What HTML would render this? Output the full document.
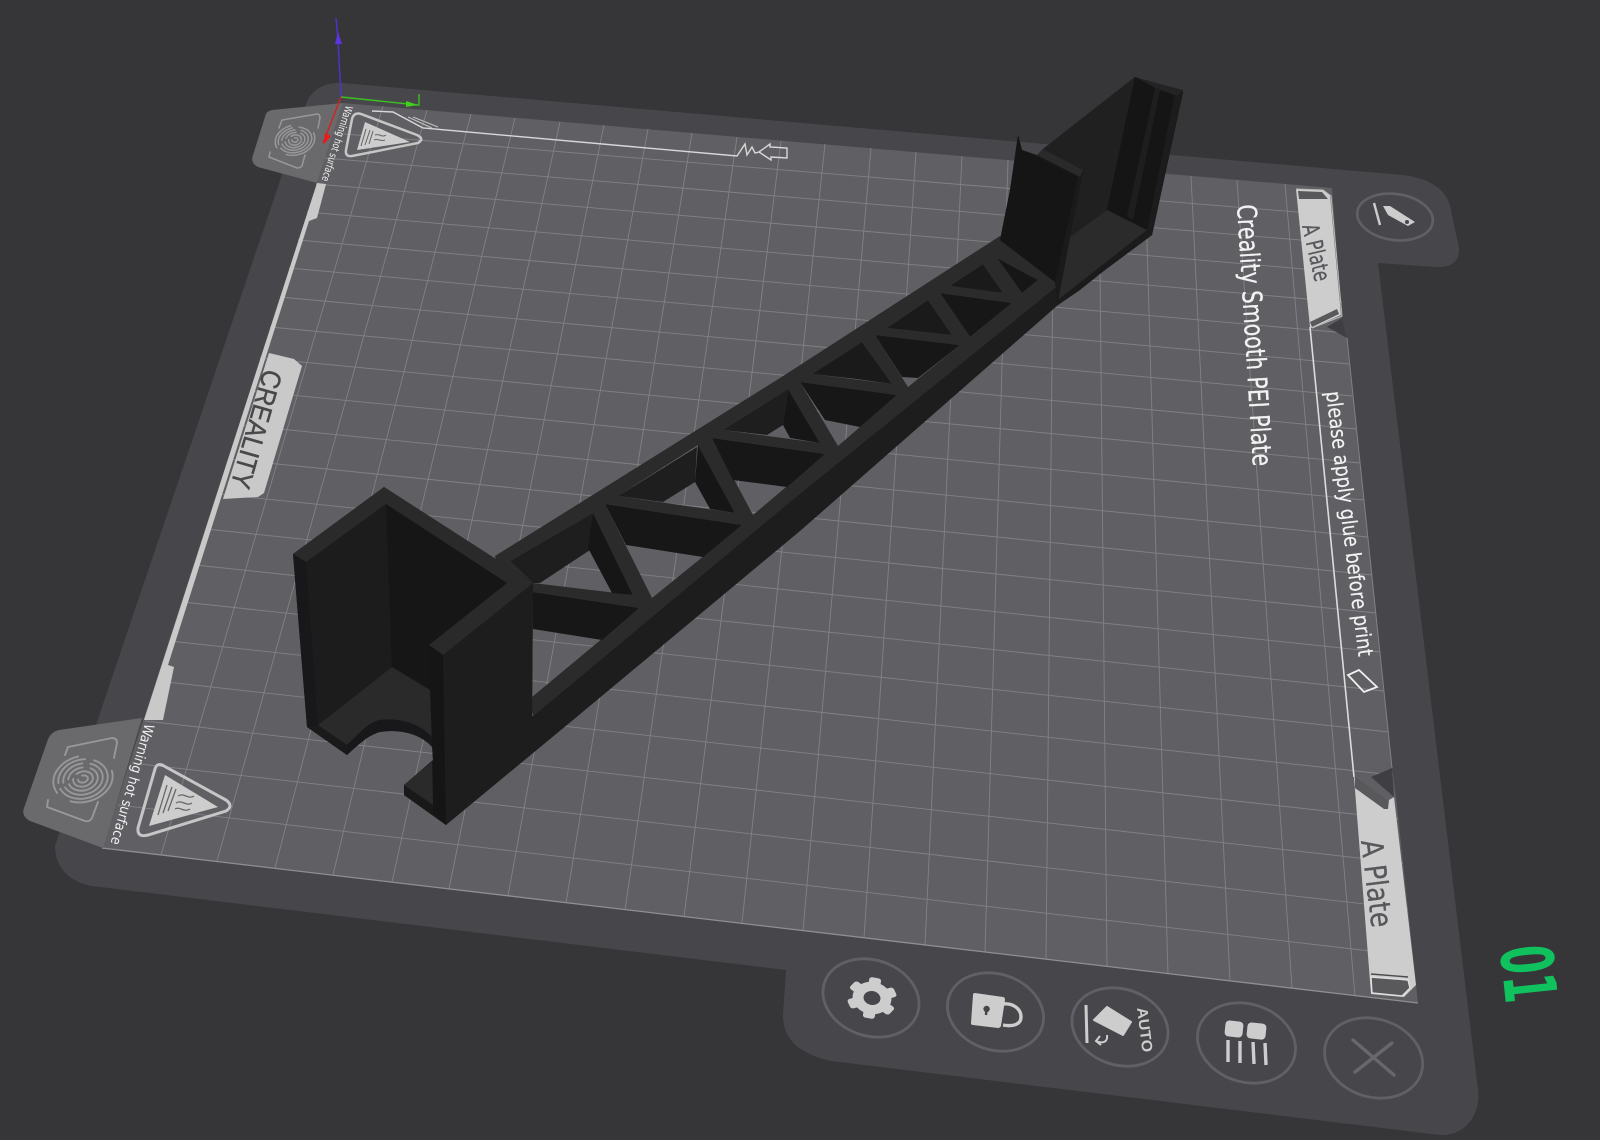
<!DOCTYPE html>
<html><head><meta charset="utf-8"><title>Creality Print</title>
<style>html,body{margin:0;padding:0;background:#363638;width:1600px;height:1140px;overflow:hidden}svg{display:block}text{font-family:"DejaVu Sans","Liberation Sans",sans-serif}</style>
</head><body>
<svg xmlns="http://www.w3.org/2000/svg" width="1600" height="1140" viewBox="0 0 1600 1140">
<rect width="1600" height="1140" fill="#363638"/>
<!-- bed -->
<path d="M306 104C311 90 325 82 342 83L1402 175C1430 178 1448 190 1451 210L1459 248C1460 262 1450 268 1436 267L1378 263L1478 1090C1481 1115 1465 1136 1440 1135L831 1061C800 1054 783 1040 783 1015L786 970L92 886C70 882 55 868 55 846Z" fill="#47474b"/>
<path d="M343 103L1332 188L1342 318L1347 338L1392 768L1396 797L1418 1003L102 848Z" fill="#606064"/>
<!-- grid -->
<path fill="none" stroke="#828286" stroke-width=".9" d="M161 855L383 106M217 861L427 110M275 868L471 114M333 875L515 118M392 882L560 122M449 889L604 125M508 896L648 129M566 903L692 133M625 910L737 137M684 917L781 141M742 923L825 144M803 931L871 148M864 938L916 152M925 945L962 156M985 952L1008 160M1046 959L1054 164M1107 966L1099 168M1168 974L1145 172M1230 981L1191 176M1292 988L1237 180M1355 996L1285 184"/>
<path fill="none" stroke="#828286" stroke-width=".9" d="M332 133L1333 215M324 158L1336 243M316 184L1339 272M307 212L1342 302M298 240L1346 333M289 268L1349 364M280 297L1352 396M270 327L1356 429M260 358L1360 463M250 391L1364 500M239 425L1368 537M228 459L1372 575M217 494L1376 613M206 529L1380 652M195 565L1384 691M183 602L1389 732M170 641L1393 775M158 681L1398 819M145 721L1403 863M132 763L1408 909M118 805L1413 956"/>
<path d="M102 848L1418 1003" stroke="#8f8f92" stroke-width="1.3" fill="none"/>
<!-- left strips -->
<path d="M317 183L326 184L317 218L309 221L168 665L174 667L163 720L144 720Z" fill="#c9c9c9"/>
<path d="M269 353L294 359L302 366L264 493L258 497L223 499Z" fill="#c9c9c9"/>
<text transform="translate(264,368) rotate(106)" font-size="28" fill="#48484b" stroke="#48484b" stroke-width=".4" textLength="122" lengthAdjust="spacingAndGlyphs" style="font-family:'Liberation Sans',sans-serif">CREALITY</text>
<!-- tabs -->
<path d="M272 110L343 103L317 183L258 167Q250 163 253 155L265 117Q266 111 272 110Z" fill="#6a6a6d"/>
<path d="M59 730L142 718L103 848L30 821Q21 816 24 808L47 742Q50 732 59 730Z" fill="#6a6a6d"/>
<!-- bottom fingerprint -->
<g fill="none" stroke="#98989a" stroke-width="1.9" stroke-linecap="round">
<path d="M65 755L68 747L112 738Q117 738 117 743L114 758M48 800L47 807L85 821Q90 822 92 818L98 802" stroke-linejoin="round"/>
<g transform="translate(83,779) rotate(-14)">
<ellipse rx="5" ry="3.5" stroke-dasharray="14 6"/>
<ellipse rx="10" ry="7.5" stroke-dasharray="30 6"/>
<ellipse rx="15" ry="11.5" stroke-dasharray="40 5 20 8"/>
<ellipse rx="20" ry="15.5" stroke-dasharray="52 5 30 8"/>
<ellipse rx="25" ry="19.5" stroke-dasharray="66 6 40 9"/>
<ellipse rx="30" ry="23" stroke-dasharray="60 16 50 40"/>
</g>
</g>
<!-- top fingerprint -->
<g fill="none" stroke="#98989a" stroke-width="1.5" stroke-linecap="round">
<path d="M279 128L282 120L317 114Q320 114 320 118L318 128M270 152L269 157L297 168Q300 168 302 166L305 155"/>
<g transform="translate(295,140) rotate(-14)">
<ellipse rx="3" ry="2.2" stroke-dasharray="9 3"/>
<ellipse rx="6.5" ry="5" stroke-dasharray="20 4"/>
<ellipse rx="10" ry="7.5" stroke-dasharray="28 4 12 5"/>
<ellipse rx="13.5" ry="10" stroke-dasharray="36 4 18 6"/>
<ellipse rx="17" ry="12.5" stroke-dasharray="42 4 24 7"/>
<ellipse rx="20" ry="15" stroke-dasharray="40 12 30 26"/>
</g>
</g>
<!-- heat triangles -->
<path d="M155 769Q157 762 164 766L226 800Q234 806 226 811L148 835Q137 838 138 828Z" fill="none" stroke="#c6c6c6" stroke-width="3"/>
<path d="M165 775L218 807L149 826Z" fill="#cdcdcd"/>
<path d="M167 785L158 815M172 787L163 813M176 789L168 811M178 796C184 792 188 800 194 796M176 803C182 799 186 807 192 803M175 809C180 806 184 813 190 809" fill="none" stroke="#66666a" stroke-width="1.3"/>
<path d="M352 119Q354 112 361 114L417 135Q425 139 418 143L352 156Q345 157 346 150Z" fill="none" stroke="#c6c6c6" stroke-width="2.5"/>
<path d="M365 122L410 142L357 150Z" fill="#cdcdcd"/>
<path d="M366 129L361 146M370 130L365 145M373 131L369 144M375 135C379 133 382 138 386 135M374 140C378 138 381 142 385 140" fill="none" stroke="#66666a" stroke-width="1"/>
<!-- top line -->
<path d="M372 111L393 112L423 128L737 156L745 144L747 155L752 147L755 153L759 152L770 144L770 147L787 148L787 158L771 157L771 160L759 152" fill="none" stroke="#d8d8d8" stroke-width="1.4"/>
<path d="M408 117L432 128M413 117L438 127" stroke="#c0c0c0" stroke-width="1.2" fill="none"/>
<!-- right tag top -->
<path d="M1296 189L1323 190L1330 195L1341 315L1312 328L1310 327Z" fill="#cdcdcd"/>
<path d="M1298 191L1322 192L1328 199L1299 199Z" fill="#59595c"/>
<path d="M1310 322L1337 309L1339 314L1312 327Z" fill="#59595c"/>
<path d="M1296 189L1323 190L1331 196L1342 316L1312 328" fill="none" stroke="#bdbdbd" stroke-width="1"/>
<path d="M1327 327L1342 318L1347 338Z" fill="#3f3f43"/>
<text transform="translate(1302,226) rotate(77)" font-size="23" fill="#58585c" stroke="#58585c" stroke-width=".3" textLength="58" lengthAdjust="spacingAndGlyphs">A Plate</text>
<!-- white line -->
<path d="M1310 327L1354 777" stroke="#dcdcdc" stroke-width="1.6" fill="none"/>
<path d="M1347 338L1392 768" stroke="#818185" stroke-width="1" fill="none"/>
<!-- lower tag -->
<path d="M1354 777L1389 800L1394 797L1416 985L1404 997L1371 994Z" fill="#cdcdcd"/>
<path d="M1355 777L1389 800L1388 809L1384 809L1355 788Z" fill="#59595c"/>
<path d="M1371 777L1392 768L1394 797Z" fill="#3f3f43"/>
<path d="M1371 977L1408 980L1410 988L1402 996L1372 993Z" fill="#59595c" stroke="#e0e0e0" stroke-width="1.4"/>
<path d="M1371 974L1408 977" stroke="#4b4b4e" stroke-width="1.4"/>
<text transform="translate(1361,841) rotate(83)" font-size="30" fill="#58585c" stroke="#58585c" stroke-width=".3" textLength="88" lengthAdjust="spacingAndGlyphs">A Plate</text>
<!-- plate text -->
<text transform="translate(1237,205) rotate(86.5)" font-size="27" fill="#f2f2f2" stroke="#f2f2f2" stroke-width=".3" textLength="262" lengthAdjust="spacingAndGlyphs">Creality Smooth PEI Plate</text>
<text transform="translate(1326,392) rotate(83)" font-size="21" fill="#f2f2f2" stroke="#f2f2f2" stroke-width=".2" textLength="267" lengthAdjust="spacingAndGlyphs">please apply glue before print</text>
<path d="M1359 670L1377 687L1364 692L1348 675Z" fill="none" stroke="#f0f0f0" stroke-width="1.8"/>
<text transform="translate(145,723) rotate(106)" font-size="14" fill="#f0f0f0" textLength="125" lengthAdjust="spacingAndGlyphs">Warning hot surface</text>
<text transform="translate(346,105) rotate(108)" font-size="10.5" fill="#f0f0f0" textLength="79" lengthAdjust="spacingAndGlyphs">Warning hot surface</text>
<!-- buttons -->
<g fill="none" stroke="#616165" stroke-width="2.8">
<ellipse cx="871" cy="998" rx="49" ry="38" transform="rotate(18 871 998)"/>
<ellipse cx="995.5" cy="1012" rx="49" ry="38" transform="rotate(18 995.5 1012)"/>
<ellipse cx="1120" cy="1027" rx="49" ry="38" transform="rotate(18 1120 1027)"/>
<ellipse cx="1246.5" cy="1043" rx="50" ry="39" transform="rotate(18 1246.5 1043)"/>
<ellipse cx="1373.6" cy="1058" rx="50" ry="39" transform="rotate(18 1373.6 1058)"/>
</g>
<!-- gear -->
<g transform="translate(872,998) rotate(10) scale(1,.82)" fill="#cdcdcd">
<circle r="14" fill="none" stroke="#cdcdcd" stroke-width="11"/>
<rect x="-6" y="-25" width="12" height="10" rx="3"/>
<rect x="-6" y="-25" width="12" height="10" rx="3" transform="rotate(60)"/>
<rect x="-6" y="-25" width="12" height="10" rx="3" transform="rotate(120)"/>
<rect x="-6" y="-25" width="12" height="10" rx="3" transform="rotate(180)"/>
<rect x="-6" y="-25" width="12" height="10" rx="3" transform="rotate(240)"/>
<rect x="-6" y="-25" width="12" height="10" rx="3" transform="rotate(300)"/>
</g>
<!-- lock -->
<path d="M975 993L1003 997Q1005 997 1005 1000L1001 1026Q1000 1028 998 1028L973 1025Q971 1025 971 1023L973 995Q973 993 975 993Z" fill="#cdcdcd"/>
<circle cx="986.6" cy="1009" r="3.2" fill="#47474b"/><path d="M986.4 1009L986 1015" stroke="#47474b" stroke-width="2.4"/>
<path d="M1003 1004C1012 1003 1021 1008 1021 1017C1021 1024 1014 1027 1003 1025" fill="none" stroke="#cdcdcd" stroke-width="3.4"/>
<!-- auto -->
<path d="M1086 1005L1087 1043" stroke="#cdcdcd" stroke-width="3" fill="none"/>
<path d="M1107 1007L1131 1022L1123 1035L1094 1020Z" fill="#cdcdcd" stroke="#cdcdcd" stroke-width="2" stroke-linejoin="round"/>
<path d="M1107 1035C1108 1042 1103 1044 1096 1041M1100 1036L1096 1041L1101 1045" fill="none" stroke="#cdcdcd" stroke-width="2"/>
<text transform="translate(1137,1008) rotate(83)" font-size="15" font-weight="bold" fill="#cdcdcd" textLength="45" lengthAdjust="spacingAndGlyphs" style="font-family:'Liberation Sans',sans-serif">AUTO</text>
<!-- grid icon -->
<rect x="1225" y="1021" width="18" height="16" rx="4" fill="#cdcdcd" transform="rotate(6 1234 1029)"/>
<rect x="1247" y="1023" width="19" height="16" rx="4" fill="#cdcdcd" transform="rotate(6 1256 1031)"/>
<path d="M1228 1040L1228 1062M1240 1041L1240 1063M1253 1042L1254 1064M1265 1043L1266 1065" stroke="#cdcdcd" stroke-width="3.4" fill="none"/>
<!-- close -->
<path d="M1353 1040L1394 1075M1392 1043L1355 1072" stroke="#68686c" stroke-width="3.4" fill="none" stroke-linecap="round"/>
<!-- pencil -->
<ellipse cx="1395" cy="217" rx="38" ry="23" transform="rotate(8 1395 217)" fill="none" stroke="#616165" stroke-width="2.6"/>
<path d="M1374 203L1380 225" stroke="#cdcdcd" stroke-width="2.4" fill="none"/>
<path d="M1383 206L1390 206L1415 222L1408 226L1388 215Z" fill="#cdcdcd"/>
<circle cx="1407" cy="222" r="2" fill="#47474b"/>
<!-- 01 -->
<text transform="translate(1500,948) rotate(84)" font-size="72" font-weight="bold" fill="#10c25e" textLength="57" lengthAdjust="spacingAndGlyphs">01</text>

<!-- MODEL: truss band with real openings -->
<path fill-rule="evenodd" fill="#2b2b2c" d="M495 556L780 378L1000 236L1060 272L1060 290L780 510L533 716Z
M510 561L593 513L633 595L533 583Z
M533 592L639 608L532 697Z
M605 504L742 525L652 598Z
M618 496L698 445L735 513Z
M712 438L825 454L753 515Z
M723 430L788 389L820 443Z
M800 382L897 395L838 446Z
M812 374L862 342L892 384Z
M875 335L960 345L908 387Z
M887 328L928 300L952 335Z
M940 293L1012 303L970 337Z
M950 286L983 264L1003 293Z
M997 258L1038 280L1022 293Z"/>
<g>
<path d="M510 561L593 513L590 550L540 583L533 583Z" fill="#1e1e1f"/>
<path d="M593 513L633 595L612 593L588 548Z" fill="#161617"/>
<path d="M533 592L639 608L602 640L533 629Z" fill="#171718"/>
<path d="M605 504L742 525L703 557L626 545Z" fill="#171718"/>
<path d="M618 496L697 447L695 482L663 502Z" fill="#1e1e1f"/>
<path d="M698 445L735 513L710 509L695 482Z" fill="#161617"/>
<path d="M712 438L825 454L787 487L733 480Z" fill="#171718"/>
<path d="M723 430L788 389L783 425L767 435Z" fill="#1e1e1f"/>
<path d="M788 389L820 443L790 438L783 425Z" fill="#161617"/>
<path d="M800 382L897 395L860 427L825 420Z" fill="#171718"/>
<path d="M812 374L862 342L892 384L857 379Z" fill="#1a1a1b"/>
<path d="M875 335L960 345L918 378L902 377Z" fill="#171718"/>
<path d="M887 328L928 300L952 335Z" fill="#1a1a1b"/>
<path d="M940 293L1012 303L970 337Z" fill="#171718"/>
<path d="M950 286L983 264L1003 293Z" fill="#1a1a1b"/>
<path d="M997 258L1038 280L1022 293Z" fill="#161617"/>
</g>
<path d="M533 716L780 510L1055 288L1070 278L1151 233L1080 290L1058 305L800 531L573 720L446 825L470 700Z" fill="#1d1d1e"/>
<!-- far end -->
<path d="M1018 135L1022 150L1037 155L1043 149L1135 77L1183 92L1152 235L1058 305L1055 282L1000 240L1010 190Z" fill="#19191a"/>
<path d="M1043 149L1135 77L1107 210L1070 237L1080 177L1083 170Z" fill="#202021"/>
<path d="M1135 77L1183 92L1152 235L1147 230L1107 210Z" fill="#151516"/>
<path d="M1155 88L1160 90L1133 220L1127 216Z" fill="#1e1e1f"/>
<path d="M1175 93L1183 90L1152 235L1147 230Z" fill="#1c1c1d"/>
<path d="M1135 77L1152 86L1155 88L1177 96L1183 90L1160 84Z" fill="#232324"/>
<path d="M1107 210L1147 230L1058 300L1070 237Z" fill="#2b2b2c"/>
<path d="M1147 230L1152 235L1058 305L1058 300Z" fill="#1b1b1c"/>
<path d="M1078 177L1083 172L1070 237L1058 302L1055 280Z" fill="#1a1a1b"/>
<path d="M1018 135L1022 150L1078 177L1055 282L1000 240L1010 190Z" fill="#151516"/>
<path d="M1043 149L1083 170L1080 177L1037 155Z" fill="#2a2a2b"/>
<!-- left box -->
<path d="M293 554L384 487L533 583L532 717L446 825L404 795L404 785L433 760L432 745C420 733 398 729 380 732C368 735 358 745 347 755L307 727Z" fill="#19191a"/>
<path d="M293 554L306 562L317 725L307 727Z" fill="#18181a"/>
<path d="M306 562L386 504L392 667L318 725Z" fill="#1c1c1d"/>
<path d="M386 504L507 583L430 645L430 690L392 667Z" fill="#161617"/>
<path d="M318 725L392 667L430 690L432 737C418 722 398 718 380 720C368 722 358 735 347 745Z" fill="#2a2a2b"/>
<path d="M307 727L318 725L347 745L347 755Z" fill="#1a1a1b"/>
<path d="M347 745C358 735 368 722 380 720C398 718 418 722 432 737L432 747C420 733 398 729 380 732C368 735 358 745 347 755Z" fill="#18181a"/>
<path d="M404 785L432 762L433 805Z" fill="#2a2a2b"/>
<path d="M404 785L404 795L446 825L433 805Z" fill="#19191a"/>
<path d="M429 645L443 655L446 825L433 813L433 760L432 745L430 690Z" fill="#151516"/>
<path d="M443 655L533 583L532 717L446 825Z" fill="#1d1d1e"/>
<path d="M293 554L384 487L533 583L443 655L429 645L507 583L386 504L306 562Z" fill="#2a2a2b"/>
<!-- axes -->
<path d="M341 97L338 40L336 18" stroke="#4a35c8" stroke-width="1.5" fill="none"/>
<path d="M338 32L342 44L335 44Z" fill="#5a35e0"/>
<path d="M341 97L418 105M419 94L419 106" stroke="#3ac020" stroke-width="1.4" fill="none"/>
<path d="M406 101L418 105L406 107Z" fill="#40d020"/>
<path d="M341 97L323 143" stroke="#d82020" stroke-width="1.4" fill="none"/>
<path d="M325 133L331 136L324 144Z" fill="#f01818"/>
</svg>
</body></html>
